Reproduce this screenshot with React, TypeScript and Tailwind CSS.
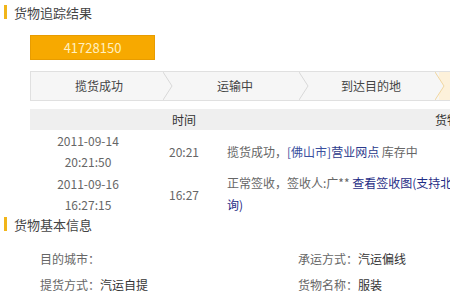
import React from "react";

const font = { fontFamily: '"Noto Sans CJK SC", "Noto Sans", sans-serif' };

function SectionTitle({ text }: { text: string }) {
  return (
    <div className="flex items-center h-[18px]">
      <div className="w-[3px] h-[14px] bg-[#f1b51a] ml-[4px]" />
      <span className="ml-[7px] text-[13px] text-[#444] leading-none">{text}</span>
    </div>
  );
}

const steps = ["揽货成功", "运输中", "到达目的地"];

function Chevron({ edge }: { edge: string }) {
  return (
    <svg className="absolute top-0 -right-[6px] z-10" width="10" height="28" viewBox="0 0 10 28">
      <polygon points="0,0 9,14 0,28" fill="#f6f6f6" />
      <polyline points="0,0 9,14 0,28" fill="none" stroke={edge} strokeWidth="1" />
    </svg>
  );
}

export default function App() {
  return (
    <div className="w-[450px] h-[300px] overflow-hidden bg-white" style={font}>
      <div className="w-[620px] pt-[3px]">
        <SectionTitle text="货物追踪结果" />

        {/* order number */}
        <div className="ml-[30px] mt-[14px] w-[125px] h-[25px] bg-[#f7a900] border border-[#e89c00] flex items-center justify-center text-[13px] text-[#fff0c0]">
          41728150
        </div>

        {/* steps */}
        <div className="ml-[30px] mt-[11px] flex h-[30px] border border-[#e0e0e0] bg-[#f6f6f6]">
          {steps.map((s, i) => (
            <div key={s} className="relative w-[136px] flex items-center justify-center text-[12px] text-[#444]">
              {s}
              <Chevron edge={i === 2 ? "#f0d6a0" : "#d8d8d8"} />
            </div>
          ))}
          <div className="flex-1 bg-[#fdf1da]" />
        </div>

        {/* table */}
        <div className="ml-[30px] mt-[8px]">
          <div className="grid grid-cols-[116px_76px_1fr] h-[21px] bg-[#efefef] items-center text-[12px] text-[#333]">
            <div />
            <div className="text-center">时间</div>
            <div className="pl-[213px]">货物状态</div>
          </div>
          <div className="grid grid-cols-[116px_76px_1fr] h-[42px] items-center text-[12px] text-[#666] leading-[21px]">
            <div className="text-center">
              <div>2011-09-14</div>
              <div>20:21:50</div>
            </div>
            <div className="text-center">20:21</div>
            <div className="pl-[5px] whitespace-nowrap">
              揽货成功，<span className="text-[#3a4f9e]">[佛山市]</span>
              <span className="text-[#2b3a8c]">营业网点</span> 库存中
            </div>
          </div>
          <div className="grid grid-cols-[116px_76px_1fr] h-[42px] items-center text-[12px] text-[#666] leading-[21px]">
            <div className="text-center">
              <div>2011-09-16</div>
              <div>16:27:15</div>
            </div>
            <div className="text-center">16:27</div>
            <div className="pl-[5px] whitespace-nowrap leading-[22px]">
              <div>
                正常签收，签收人:广** <span className="text-[#1f2d86]">查看签收图(支持北京查</span>
              </div>
              <div className="text-[#1f2d86]">询)</div>
            </div>
          </div>
        </div>

        <div className="mt-[1px]">
          <SectionTitle text="货物基本信息" />
        </div>

        {/* basic info */}
        <div className="mt-[13px] ml-[40px] grid grid-cols-[258px_1fr] text-[12px] text-[#666] leading-[26px]">
          <div>目的城市：</div>
          <div>
            承运方式：<span className="text-[#333]">汽运偏线</span>
          </div>
          <div>
            提货方式：<span className="text-[#333]">汽运自提</span>
          </div>
          <div>
            货物名称：<span className="text-[#333]">服装</span>
          </div>
        </div>
      </div>
    </div>
  );
}
